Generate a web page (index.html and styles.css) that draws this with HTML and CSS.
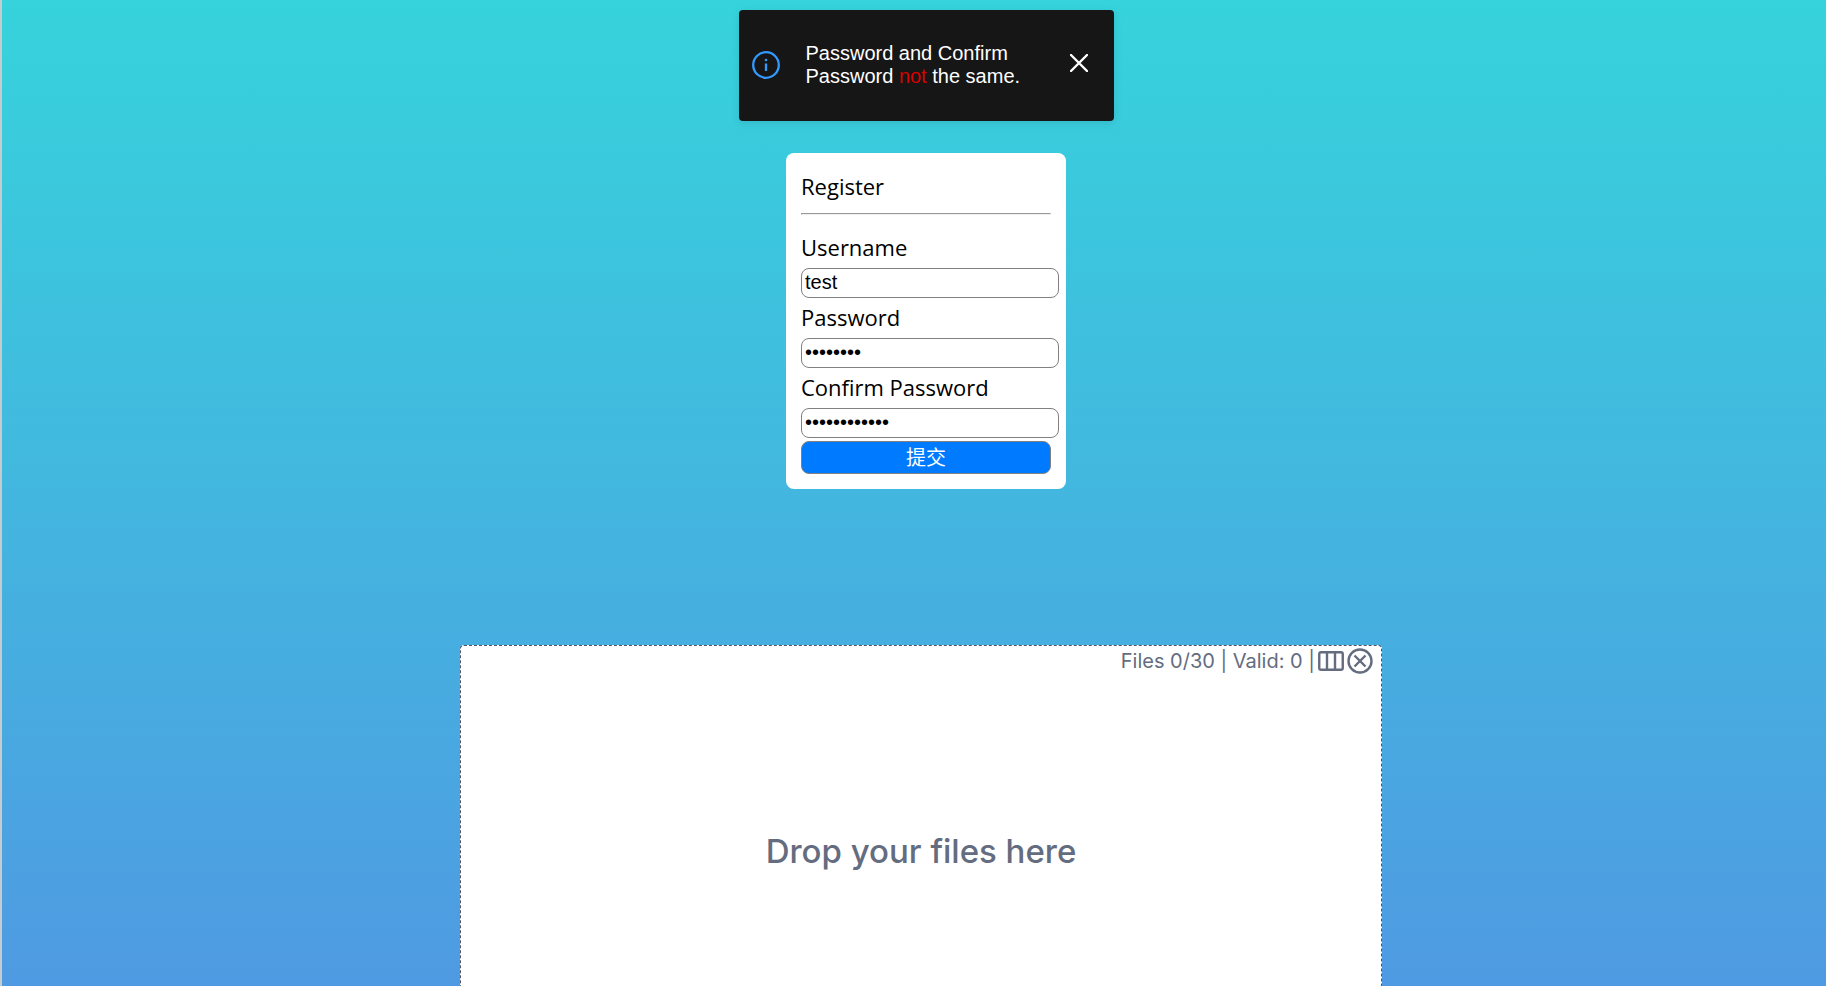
FILE: index.html
```html
<!DOCTYPE html>
<html lang="en">
<head>
<meta charset="utf-8">
<title>Register</title>
<link rel="stylesheet" href="styles.css">
</head>
<body class="page">
<div class="toast" role="alert">
  <svg class="toast-icon" viewBox="0 0 28 28" aria-hidden="true"><circle cx="14" cy="14" r="12.8" fill="none" stroke="#3399ff" stroke-width="2.3"/><circle cx="14" cy="9" r="1.3" fill="#3399ff"/><path d="M14 12.500v7.500" stroke="#3399ff" stroke-width="2.300"/></svg>
  <p class="toast-text">Password and Confirm Password <span class="toast-not">not</span> the same.</p>
  <button class="toast-close" type="button" aria-label="Close"><svg class="close-icon" viewBox="0 0 18 18" aria-hidden="true"><path d="M1 1l16 16M17 1L1 17" stroke="#fff" stroke-width="2.4" stroke-linecap="round"/></svg></button>
</div>
<form class="card">
  <div class="card-title">Register</div>
  <hr class="rule">
  <label class="label" for="username">Username</label>
  <input class="field" id="username" type="text" value="test">
  <label class="label" for="password">Password</label>
  <input class="field" id="password" type="password" value="abcdefgh">
  <label class="label" for="confirm">Confirm Password</label>
  <input class="field" id="confirm" type="password" value="abcdefghijkl">
  <button class="submit" type="button">提交</button>
</form>
<section class="dropzone">
  <header class="drop-header">
    <span>Files 0/30 | Valid: 0 |</span>
    <button class="icon-button" type="button" aria-label="Change view"><svg class="columns-icon" viewBox="0 0 26 20" aria-hidden="true"><path d="M3 1.25h20q1.75 0 1.75 1.75v14q0 1.75-1.75 1.75H3Q1.25 18.750 1.250 17V3Q1.250 1.250 3 1.250zM9 1v18M17 1v18" fill="none" stroke="#646c7f" stroke-width="2.4"/></svg></button>
    <button class="icon-button" type="button" aria-label="Clear files"><svg class="clear-icon" viewBox="0 0 26 26" aria-hidden="true"><circle cx="13" cy="13" r="11.5" fill="none" stroke="#646c7f" stroke-width="2.4"/><path d="M7.500 7.500l11 11M18.500 7.500l-11 11" stroke="#646c7f" stroke-width="2.400"/></svg></button>
  </header>
  <p class="drop-text">Drop your files here</p>
</section>
</body>
</html>
```
FILE: styles.css
```css
* {
  box-sizing: border-box;
}

.page {
  display: flex;
  flex-direction: column;
  align-items: center;
  height: 100vh;
  margin: 0;
  padding: 10px 0 0 24px;
  overflow: hidden;
  border-left: 2px solid #c4ccd0;
  background: linear-gradient(180deg, #36d3dc, #4f9ae2);
  font-family: "Open Sans", "Noto Sans CJK SC", sans-serif;
}

.toast {
  display: flex;
  flex: none;
  align-items: center;
  width: 375px;
  max-width: 100%;
  min-height: 111px;
  padding: 0 26px 2px 13px;
  border-radius: 4px;
  background: #161616;
  box-shadow: 0 2px 8px rgba(0, 0, 0, 0.1);
  color: #fff;
  font: 20px/23px "Liberation Sans", Arial, sans-serif;
}

.toast-icon {
  flex: none;
  width: 28px;
  height: 28px;
}

.toast-text {
  flex: 1;
  margin: 0;
  padding: 0 26px;
}

.toast-not {
  color: #d90000;
}

.toast-close {
  display: flex;
  padding: 0 0 4px;
  border: 0;
  background: none;
}

.close-icon {
  width: 18px;
  height: 18px;
}

.card {
  display: flex;
  flex: none;
  flex-direction: column;
  width: 280px;
  max-width: 100%;
  margin-top: 32px;
  padding: 15px;
  border-radius: 8px;
  background: #fff;
  font-size: 22px;
  line-height: 36px;
}

.rule {
  width: 100%;
  margin: 9px 0 12px;
}

.label {
  padding-bottom: 2px;
  line-height: 38px;
}

.rule + .label {
  padding-top: 1px;
}

.field {
  width: calc(100% + 8px);
  height: 30px;
  padding: 0 3px 1px;
  border: 1px solid #808080;
  border-radius: 8px;
  background: #fff;
  color: #000;
  font: 20px "Liberation Sans", Arial, sans-serif;
}

.submit {
  height: 33px;
  margin-top: 3px;
  padding: 0;
  border: 1px solid #808080;
  border-radius: 8px;
  background: #007bff;
  color: #fff;
  font: 20px/30px "Liberation Sans", "Noto Sans CJK SC", sans-serif;
}

.dropzone {
  display: flex;
  flex: none;
  flex-direction: column;
  width: 922px;
  max-width: 100%;
  height: 414px;
  margin: 156px 10px 0 0;
  border: 1px dashed #50566a;
  border-radius: 4px;
  background: #fff;
  color: #646c7f;
  font-family: Inter, sans-serif;
}

.drop-header {
  display: flex;
  align-items: center;
  justify-content: flex-end;
  gap: 3px;
  height: 30px;
  padding-right: 8px;
  font-size: 20px;
}

.icon-button {
  display: flex;
  padding: 0;
  border: 0;
  background: none;
}

.columns-icon {
  width: 26px;
  height: 20px;
}

.clear-icon {
  width: 26px;
  height: 26px;
}

.drop-text {
  display: flex;
  flex: 1;
  align-items: center;
  justify-content: center;
  margin: 0;
  padding-bottom: 32px;
  font-size: 33px;
  font-weight: 500;
}
```
